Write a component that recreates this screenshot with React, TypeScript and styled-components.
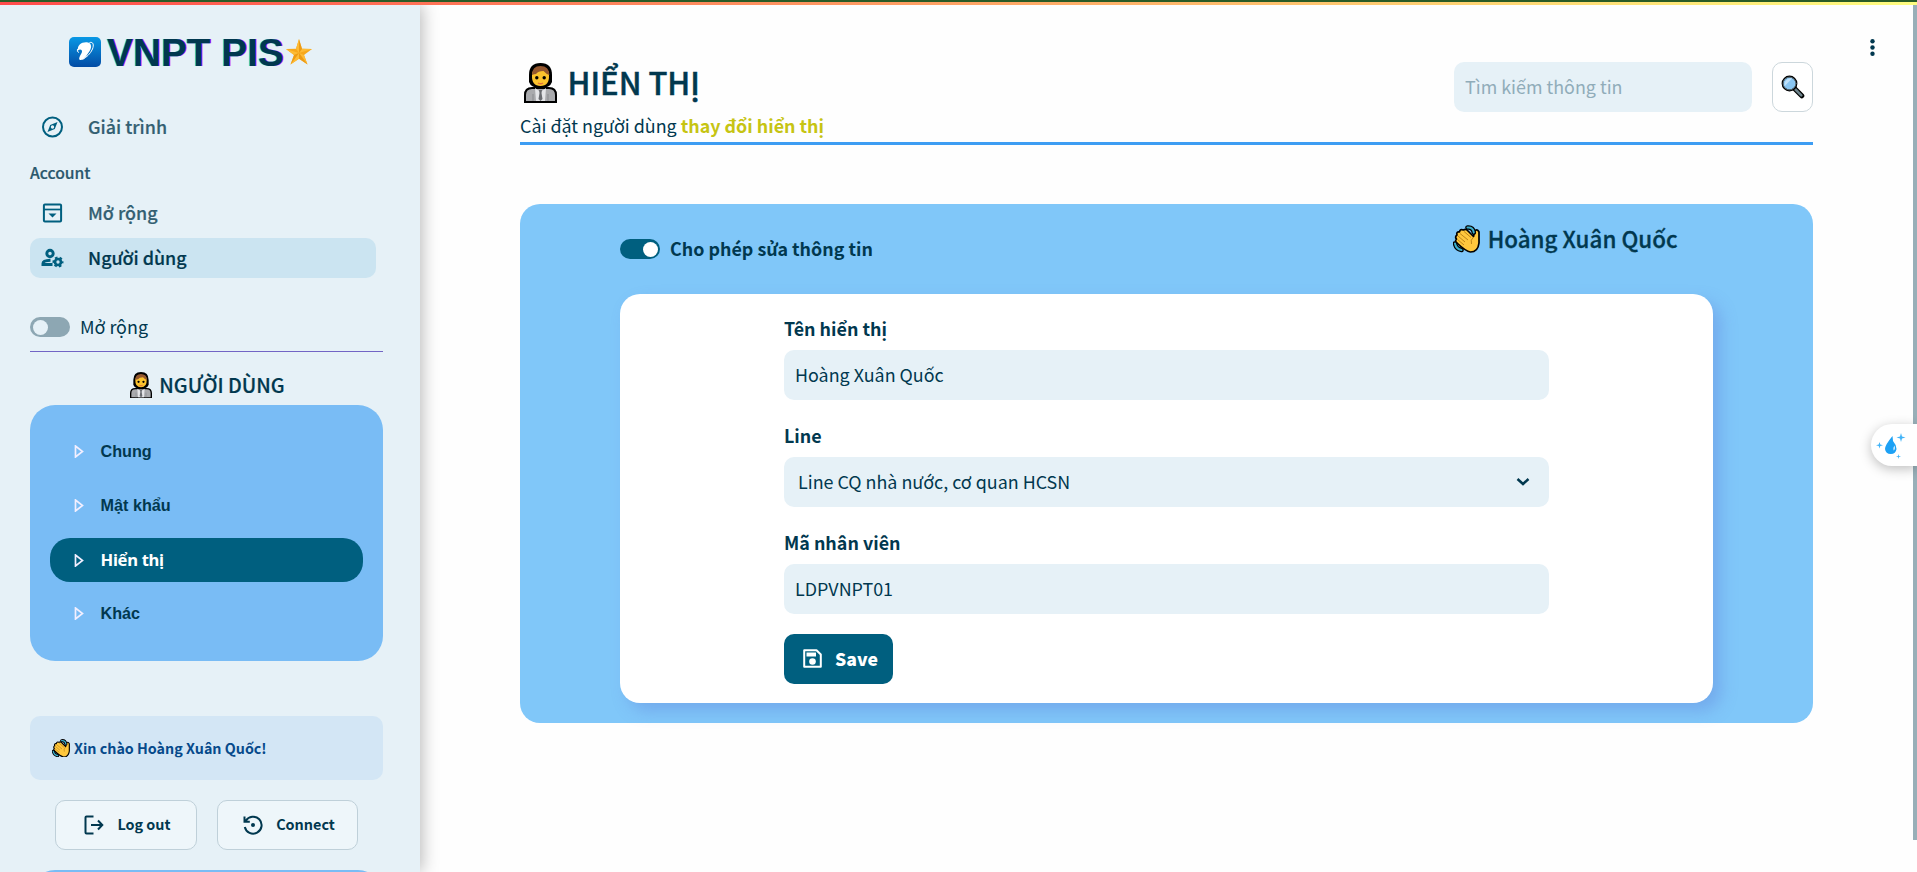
import React from "react";
import styled, { createGlobalStyle, css } from "styled-components";

const sans = `"Noto Sans CJK SC", "Noto Sans", sans-serif`;
const ink = "#01384f";
const teal = "#005f7f";
const pale = "#e6f1f7";

const Global = createGlobalStyle`
  *, *::before, *::after { box-sizing: border-box; }
  body { margin: 0; background: #fefefe; color: ${ink}; font-family: ${sans}; font-size: 17.9px; overflow: hidden; }
  h1, h2, p { margin: 0; }
  svg { display: block; flex: none; }
  button, input { font-family: inherit; color: inherit; }
`;

const semibold = css`
  font-weight: 500;
  -webkit-text-stroke: 0.2px currentColor;
`;

const Page = styled.div`
  height: 872px;
  display: flex;
  flex-direction: column;
  overflow: hidden;
`;
const Decoration = styled.div`
  flex: none;
  height: 5px;
  border-top: 2px solid #2a5c26;
  background: linear-gradient(90deg, #ff4b4b, #fffd80);
`;
const Body = styled.div`
  flex: 1;
  display: flex;
  min-height: 0;
`;

/* Sidebar */
const Sidebar = styled.aside`
  width: 420px;
  flex: none;
  padding: 0 37px 0 30px;
  background: ${pale};
  box-shadow: 2px 0 16px rgba(0, 0, 0, 0.28);
  display: flex;
  flex-direction: column;
  overflow: hidden;
  clip-path: inset(0 -20px 0 0);
  > * { flex-shrink: 0; }
`;
const Brand = styled.div`
  display: flex;
  align-items: center;
  height: 40px;
  margin: 27px 0 35px 39px;
`;
const BrandName = styled.span`
  font: bold 38.8px/40px "Liberation Sans", Arial, sans-serif;
  margin: 1px 2px 0 6px;
  white-space: nowrap;
  text-shadow: -1px 0 #3fe6ee, 1px 0 #d41ff0;
`;
const NavItem = styled.div<{ $active?: boolean }>`
  display: flex;
  align-items: center;
  gap: 24px;
  width: 346px;
  height: 40px;
  padding-left: 11px;
  border-radius: 10px;
  font-size: 17.9px;
  line-height: 24px;
  ${semibold}
  color: ${(p) => (p.$active ? ink : "#335f72")};
  background: ${(p) => (p.$active ? "#cbe4f1" : "transparent")};
  & + & { margin-top: 5px; }
  svg { color: ${teal}; }
  span { padding-bottom: 3px; }
`;
const NavGroup = styled.div`
  font-size: 15.7px;
  line-height: 24px;
  ${semibold}
  color: #2a586c;
  margin: 14px 0 8px;
`;
const ToggleRow = styled.div<{ $bold?: boolean }>`
  display: flex;
  align-items: center;
  gap: 10px;
  height: 30px;
  line-height: 24px;
  font-weight: ${(p) => (p.$bold ? 700 : 400)};
`;
const ToggleText = styled.span`
  padding-bottom: 3px;
`;
const Track = styled.span<{ $on?: boolean }>`
  width: 40px;
  height: 20px;
  padding: 2.5px 2px 2.5px 3px;
  border-radius: 10px;
  display: flex;
  justify-content: ${(p) => (p.$on ? "flex-end" : "flex-start")};
  background: ${(p) => (p.$on ? teal : "#8da7b3")};
  &::after {
    content: "";
    width: 15px;
    height: 15px;
    border-radius: 50%;
    background: ${(p) => (p.$on ? "#fff" : pale)};
  }
`;
const NavFooter = styled.div`
  margin-top: 34px;
  height: 40px;
  border-bottom: 1px solid #7265c5;
`;
const SectionTitle = styled.h2`
  display: flex;
  align-items: center;
  justify-content: center;
  gap: 7px;
  height: 40px;
  margin-top: 13px;
  padding-left: 2px;
  font-size: 19.8px;
  ${semibold}
  span { padding-bottom: 2px; }
`;
const Menu = styled.nav`
  height: 256px;
  padding: 24px 20px;
  border-radius: 25px;
  background: #79bcf5;
`;
const MenuItem = styled.div<{ $active?: boolean }>`
  display: flex;
  align-items: center;
  gap: 16.5px;
  height: 44px;
  margin-bottom: 10px;
  padding-left: 24px;
  border-radius: 20px;
  font: bold 16.2px/20px "Liberation Sans", Arial, sans-serif;
  ${(p) =>
    p.$active &&
    css`
      margin: 11px 0 9px;
      background: ${teal};
      color: #fff;
      font: bold 16.6px/20px "Noto Sans", sans-serif;
      letter-spacing: -0.3px;
    `}
`;
const Greeting = styled.div`
  display: flex;
  align-items: center;
  gap: 4px;
  height: 64px;
  margin-top: 55px;
  padding-left: 22px;
  border-radius: 10px;
  background: #d3e6f5;
  color: #064a8b;
  font-size: 14.3px;
  font-weight: 700;
  span { padding-bottom: 2px; }
`;
const Actions = styled.div`
  display: flex;
  gap: 20px;
  margin: 20px 0 20px 25px;
`;
const OutlineButton = styled.button<{ $w: number }>`
  display: flex;
  align-items: center;
  justify-content: center;
  gap: 13px;
  width: ${(p) => p.$w}px;
  height: 50px;
  padding: 0 0 1px 3px;
  border: 1px solid #bfd0d9;
  border-radius: 10px;
  background: #eef6fa;
  font-size: 14.4px;
  font-weight: 700;
  span { padding-bottom: 2px; }
`;
const NextPanel = styled.div`
  height: 60px;
  border-radius: 25px;
  background: #79bcf5;
`;

/* Main area */
const Main = styled.main`
  flex: 1;
  padding: 57px 104px 0 100px;
`;
const PageHead = styled.header`
  display: flex;
  justify-content: space-between;
  height: 83px;
  border-bottom: 3px solid #3d9df3;
`;
const PageTitle = styled.h1`
  display: flex;
  align-items: center;
  gap: 10.5px;
  height: 41px;
  padding-left: 4px;
  font-size: 31px;
  line-height: 41px;
  font-weight: 500;
  -webkit-text-stroke: 0.45px currentColor;
  span { margin-top: -2px; }
`;
const Subtitle = styled.p`
  line-height: 24px;
  margin-top: 10px;
  b { color: #c6c413; }
`;
const Search = styled.div`
  display: flex;
  gap: 20px;
`;
const SearchInput = styled.input`
  width: 298px;
  height: 50px;
  padding: 0 11px 3px;
  border: 0;
  border-radius: 10px;
  background: ${pale};
  font-size: 17.9px;
  &::placeholder { color: #90acb9; opacity: 1; }
`;
const IconButton = styled.button`
  display: flex;
  align-items: center;
  justify-content: center;
  width: 41px;
  height: 50px;
  padding: 0;
  border: 1px solid #ccd7dc;
  border-radius: 10px;
  background: #fff;
`;
const Panel = styled.section`
  height: 519px;
  margin-top: 59px;
  padding: 0 100px;
  border-radius: 20px;
  background: #80c7f9;
`;
const PanelHead = styled.div`
  display: flex;
  justify-content: space-between;
  height: 90px;
  padding: 30px 35.5px 0 0;
`;
const UserName = styled.h2`
  display: flex;
  align-items: center;
  gap: 8px;
  height: 30px;
  margin-top: -10px;
  font-size: 22.4px;
  line-height: 30px;
  ${semibold}
  -webkit-text-stroke-width: 0.3px;
  span { padding-bottom: 2px; }
`;
const Card = styled.form`
  height: 409px;
  padding: 20px 164px 0;
  border-radius: 20px;
  background: #fff;
  box-shadow: 8px 8px 16px rgba(91, 116, 215, 0.34);
`;
const Field = styled.label`
  display: block;
  margin-bottom: 21px;
`;
const FieldLabel = styled.span`
  display: block;
  height: 36px;
  line-height: 28px;
  font-weight: 700;
`;
const FieldBox = styled.span<{ $select?: boolean }>`
  display: flex;
  align-items: center;
  justify-content: space-between;
  height: 50px;
  padding: 0 ${(p) => (p.$select ? "19px 1px 14px" : "11px 1px")};
  border-radius: 10px;
  background: ${pale};
  span { padding-bottom: 1px; }
`;
const SaveButton = styled.button`
  display: flex;
  align-items: center;
  gap: 12px;
  width: 109px;
  height: 50px;
  margin-top: -1px;
  padding: 0 0 1px 18px;
  border: 0;
  border-radius: 10px;
  background: ${teal};
  color: #fff;
  font-size: 17.6px;
  font-weight: 900;
`;

/* Floating over the page */
const MoreButton = styled.div`
  position: absolute;
  left: 1862px;
  top: 37px;
`;
const Scrollbar = styled.div`
  position: absolute;
  left: 1913px;
  top: 5px;
  width: 4px;
  height: 835px;
  background: #98afb8;
`;
const Assistant = styled.div`
  position: absolute;
  left: 1871px;
  top: 424px;
  width: 46px;
  height: 42px;
  border-radius: 21px 0 0 21px;
  background: #fff;
  box-shadow: 0 3px 12px rgba(0, 0, 0, 0.25);
`;

const Person = ({ w }: { w: number }) => (
  <svg width={w} height={(w * 40) / 33} viewBox="0 0 33 40">
    <path d="M1 39V32Q1 25 8 25H25Q32 25 32 32V39Z" fill="#a9aaad" stroke="#000" strokeWidth="2" />
    <path d="M5 12Q5 0 16.500 0T28 12V19Q26 25 16.500 25T5 19Z" fill="#000" />
    <path d="M8 12Q8 5 16.500 4.500T25 12Q25.500 23 16.500 23T8 12Z" fill="#fcc32d" />
    <path d="M8 12Q8 3 16.500 3T25.500 12Q22 11 19.500 8Q14 8 12 11Q10 11 8 12Z" fill="#95582f" />
    <path d="M11 25L16.500 29L22 25L21 38H12Z" fill="#e4e5e8" />
    <path d="M15 27H18L17.500 30L18.500 36L16.500 38L14.500 36L15.500 30Z" fill="#696b70" />
    <path d="M9 31V38M24 31V38" stroke="#898b8f" strokeWidth="1" />
    <circle cx="12.800" cy="14.800" r="1.700" /><circle cx="20.200" cy="14.800" r="1.700" />
    <path d="M14 20Q16.500 21.500 19 20" stroke="#e2733a" strokeWidth="1.400" fill="none" />
  </svg>
);
const Wave = ({ w }: { w: number }) => (
  <svg width={w} height={(w * 28) / 27} viewBox="0 0 27 28">
    <path d="M4 10Q3 6.500 6.500 7Q7 3.500 10.500 5Q13 3.500 15 6L20.500 11.500L21.500 6.500Q24 3 26 7V18Q25 27 17.500 27Q13 26.500 4 18Q1.500 16 3.500 14Q1.500 12 4 10Z" fill="#ffc83d" stroke="#000" strokeWidth="1.700" strokeLinejoin="round" />
    <path d="M5 11L12 17M7 8.500L15 15M4.500 14.500L11 20M11 6.500L18 12.500M20.500 12Q17 15 18.500 19" stroke="#b67d15" strokeWidth=".9" fill="none" />
    <g fill="none" strokeLinecap="round">
      <path d="M14.500 2.500Q20 2 20.800 7.500M2 18.500Q3 24 8.500 25" stroke="#000" strokeWidth="4.600" />
      <path d="M14.500 2.500Q20 2 20.800 7.500M2 18.500Q3 24 8.500 25" stroke="#3aaecb" strokeWidth="2" />
    </g>
  </svg>
);
const VnptLogo = () => (
  <svg width="32" height="30" viewBox="0 0 32 30">
    <defs><linearGradient id="vnpt" x1="0" y1="0" x2="0" y2="1"><stop stopColor="#0998e5" /><stop offset="1" stopColor="#034ca5" /></linearGradient></defs>
    <rect width="32" height="30" rx="5" fill="url(#vnpt)" />
    <path d="M9 13.500C8 8 13 4.500 19 5.500C23 6.500 23 11 20 15C17 19 16.500 21.500 12 23C9.500 23 10 21 11 19C13 15.500 13.500 14.500 12.500 13C11.500 12 10 12.500 9 13.500Z" fill="#fff" />
    <path d="M20.500 5.500C24.500 4.500 25 8 23.500 12C21.500 17 17 20.500 13.500 22.500M8.500 12Q7.500 15 10 15.500" fill="none" stroke="#fff" strokeWidth="1" />
  </svg>
);
const Star = () => (
  <svg width="26" height="26" viewBox="0 0 26 26">
    <path d="M13 0L16 9.800L26 10L18 16L21.500 25.500L13 19.700L4.500 25.500L8 16L0 10L10 9.800Z" fill="#f7a81b" />
    <path d="M13 0V14L10 9.800ZM26 10L13 14L16 9.800ZM21.500 25.500L13 14L18 16ZM4.500 25.500L13 14L13 19.700ZM0 10L13 14L8 16Z" fill="#fdbb35" />
    <path d="M13 14L13 0L16 9.800ZM13 14L21.500 25.500L13 19.700ZM13 14L4.500 25.500L8 16Z" fill="#e8930f" opacity=".6" />
  </svg>
);
const line = { fill: "none", stroke: "currentColor", strokeWidth: 2 };
const Compass = () => (
  <svg width="23" height="22" viewBox="0 0 23 22" {...line}>
    <circle cx="11.500" cy="11" r="9.500" strokeWidth="2" />
    <path fillRule="evenodd" fill="currentColor" stroke="none" d="M16.500 6L13.800 13L6.500 16L9.200 9ZM11.500 9.300A1.700 1.700 0 1 0 11.500 12.700A1.700 1.700 0 1 0 11.500 9.300Z" />
  </svg>
);
const Archive = () => (
  <svg width="23" height="22" viewBox="0 0 23 22" {...line}>
    <rect x="2.900" y="2.500" width="17.200" height="17" rx="1" strokeWidth="2" />
    <path d="M3 7.500H20" strokeWidth="1.700" />
    <path d="M7.500 11.500H15.500L11.500 15.500Z" fill="currentColor" stroke="none" />
  </svg>
);
const UserGear = () => (
  <svg width="23" height="22" viewBox="0 0 23 22" {...line}>
    <circle cx="9" cy="6.500" r="3.200" strokeWidth="2.900" />
    <path d="M11.500 17.500H2V16.500Q2 13.500 9.500 13.300" strokeWidth="3" />
    <circle cx="17" cy="15" r="3" strokeWidth="2.700" />
    <circle cx="17" cy="15" r="4.600" strokeWidth="1.800" strokeDasharray="2.600 2.217" strokeDashoffset="1.300" />
  </svg>
);
const Play = () => (
  <svg width="10" height="13" viewBox="0 0 10 13"><path d="M1.500 1V12L8.500 6.500Z" fill="none" stroke="#f2efff" strokeWidth="1.700" /></svg>
);
const Logout = () => (
  <svg width="20" height="20" viewBox="0 0 20 20" {...line}>
    <path d="M9.500 1.500H2.500Q1.500 1.500 1.500 2.500V17.500Q1.500 18.500 2.500 18.500H9.500M7 10H18M14 5.500L18.300 10L14 14.500" />
  </svg>
);
const History = () => (
  <svg width="20" height="20" viewBox="0 0 20 20" {...line}>
    <path d="M1.800 12A8.500 8.500 0 1 0 2.800 5.800M1.500 1.500V6.800H6.800" />
    <circle cx="10" cy="10" r="2" fill="currentColor" stroke="none" />
  </svg>
);
const Save = () => (
  <svg width="21" height="21" viewBox="0 0 21 21" {...line}>
    <path d="M2.200 2.200H14.500L18.800 6.500V18.800H2.200Z" strokeLinejoin="round" />
    <rect x="4.500" y="4.500" width="9.500" height="4" fill="currentColor" stroke="none" />
    <circle cx="10.500" cy="13.500" r="3.300" fill="currentColor" stroke="none" />
  </svg>
);
const Magnifier = () => (
  <svg width="24" height="24" viewBox="0 0 24 24" strokeLinecap="round">
    <path d="M14 14L20.800 20.800" stroke="#000" strokeWidth="5" />
    <path d="M14.500 14.500L20.300 20.300" stroke="#6d828a" strokeWidth="2.600" />
    <circle cx="8.500" cy="8.500" r="7" fill="#8ac6f2" stroke="#000" strokeWidth="1.800" />
    <path d="M3.800 11L11 3.500A6 6 0 0 0 3.800 11Z" fill="#c1e2fa" />
    <circle cx="8.500" cy="8.500" r="6.400" fill="none" stroke="#6b7f89" strokeWidth=".8" />
  </svg>
);
const Droplet = () => (
  <svg width="46" height="42" viewBox="0 0 46 42" fill="#42b4f8">
    <path d="M21.500 12Q14 21 14 25A5.800 5.800 0 0 0 25.500 25Q25.500 21 22 17Z" fill="#1da1f5" />
    <path d="M23.500 21.500Q25 25 22.500 26.500Q21.500 24 23.500 21.500Z" fill="#c7e9ff" />
    <path d="M30 9L31 12.500L34.500 13.500L31 14.500L30 18L29 14.500L25.500 13.500L29 12.500Z" />
    <path d="M8.500 18L9.300 20.400L12 21.200L9.300 22L8.500 24.500L7.700 22L5 21.200L7.700 20.400Z" />
    <path d="M27.500 30L28 32L30 32.500L28 33L27.500 35L27 33L25 32.500L27 32Z" />
  </svg>
);

const menu = ["Chung", "Mật khẩu", "Hiển thị", "Khác"];

export default function App() {
  return (
    <Page>
      <Global />
      <Decoration />
      <Body>
        <Sidebar>
          <Brand>
            <VnptLogo />
            <BrandName>VNPT PIS</BrandName>
            <Star />
          </Brand>
          <NavItem><Compass /><span>Giải trình</span></NavItem>
          <NavGroup>Account</NavGroup>
          <NavItem><Archive /><span>Mở rộng</span></NavItem>
          <NavItem $active><UserGear /><span>Người dùng</span></NavItem>
          <NavFooter>
            <ToggleRow><Track /><ToggleText>Mở rộng</ToggleText></ToggleRow>
          </NavFooter>
          <SectionTitle><Person w={22} /><span>NGƯỜI DÙNG</span></SectionTitle>
          <Menu>
            {menu.map((m) => (
              <MenuItem key={m} $active={m === "Hiển thị"}><Play />{m}</MenuItem>
            ))}
          </Menu>
          <Greeting><Wave w={18} /><span>Xin chào Hoàng Xuân Quốc!</span></Greeting>
          <Actions>
            <OutlineButton $w={142}><Logout /><span>Log out</span></OutlineButton>
            <OutlineButton $w={141}><History /><span>Connect</span></OutlineButton>
          </Actions>
          <NextPanel />
        </Sidebar>
        <Main>
          <PageHead>
            <div>
              <PageTitle><Person w={33} /><span>HIỂN THỊ</span></PageTitle>
              <Subtitle>Cài đặt người dùng <b>thay đổi hiển thị</b></Subtitle>
            </div>
            <Search>
              <SearchInput placeholder="Tìm kiếm thông tin" />
              <IconButton aria-label="Tìm kiếm"><Magnifier /></IconButton>
            </Search>
          </PageHead>
          <Panel>
            <PanelHead>
              <ToggleRow $bold><Track $on /><ToggleText>Cho phép sửa thông tin</ToggleText></ToggleRow>
              <UserName><Wave w={27} /><span>Hoàng Xuân Quốc</span></UserName>
            </PanelHead>
            <Card>
              <Field><FieldLabel>Tên hiển thị</FieldLabel><FieldBox><span>Hoàng Xuân Quốc</span></FieldBox></Field>
              <Field>
                <FieldLabel>Line</FieldLabel>
                <FieldBox $select>
                  <span>Line CQ nhà nước, cơ quan HCSN</span>
                  <svg width="14" height="10" viewBox="0 0 14 10" {...line} strokeWidth="2.500"><path d="M1.500 2L7 7L12.500 2" /></svg>
                </FieldBox>
              </Field>
              <Field><FieldLabel>Mã nhân viên</FieldLabel><FieldBox><span>LDPVNPT01</span></FieldBox></Field>
              <SaveButton type="button"><Save />Save</SaveButton>
            </Card>
          </Panel>
        </Main>
      </Body>
      <MoreButton>
        <svg width="21" height="21" viewBox="0 0 21 21" fill={ink}><circle cx="10.500" cy="4.300" r="2.200" /><circle cx="10.500" cy="10.500" r="2.200" /><circle cx="10.500" cy="16.700" r="2.200" /></svg>
      </MoreButton>
      <Scrollbar />
      <Assistant><Droplet /></Assistant>
    </Page>
  );
}
